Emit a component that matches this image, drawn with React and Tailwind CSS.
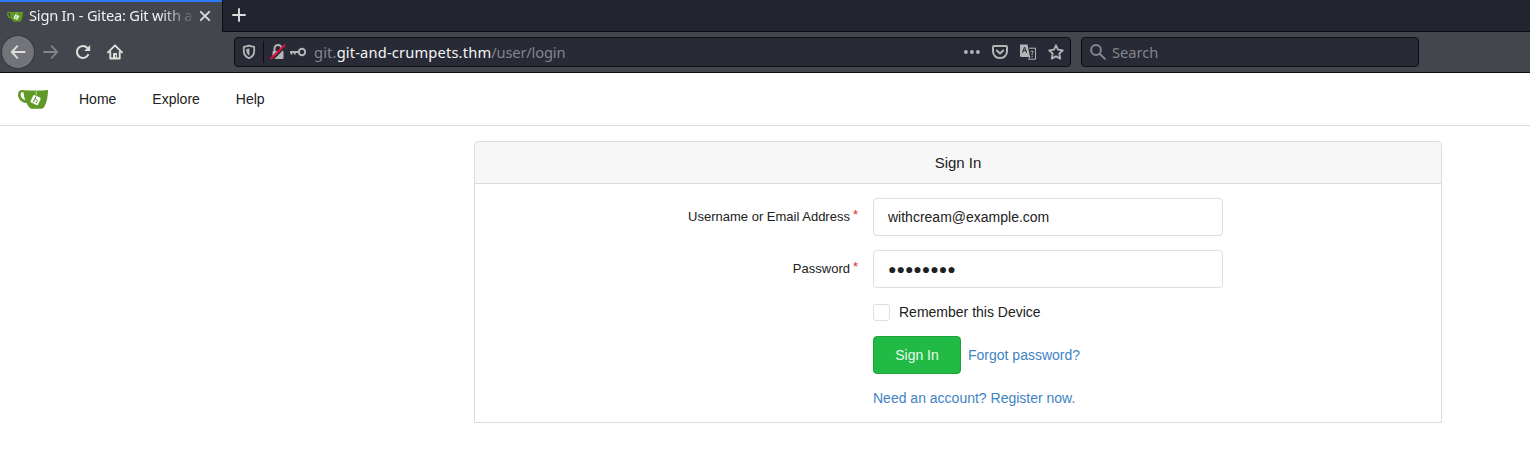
function TeaCup({ className }) {
  return (
    <svg viewBox="0 0 30 20" className={className}>
      <path
        fill="#609926"
        fillRule="evenodd"
        d="M4.200 1C1.500 1 0 3 0 5.600C0 10.400 3.600 13.700 8.700 14C9.500 16.200 11 18.600 12.800 19.400Q13.300 19.700 14 19.700H23.600Q25 19.700 25.800 18.600C28.600 14.800 29.800 8.500 30 1.500Q30 1 29.500 1Q23 1.700 16.500 1.600Q8 1.400 4.200 1ZM3.800 3.300Q4.600 3 5.500 3.400C5.700 6 6.300 8.600 7.200 11C4.400 10.200 2.700 8.200 2.600 5.500Q2.600 3.800 3.800 3.300Z"
      />
      <path d="M18.300 1.300V6.500" stroke="#c0d6a8" strokeWidth=".9" />
      <rect x="13.500" y="7" width="8.200" height="8.200" rx="1.200" fill="#fff" transform="rotate(25 17.600 11.100)" />
      <path d="M17.900 7.600 15.500 12.900M16.900 9.800l1.900.8c.6.300.7.700.5 1.200l-.9 1.900" stroke="#609926" strokeWidth="1" fill="none" />
      <circle cx="15.600" cy="12.800" r=".7" fill="#609926" />
      <circle cx="18.400" cy="13.600" r=".7" fill="#609926" />
    </svg>
  );
}

function Icon({ children, className }) {
  return (
    <svg viewBox="0 0 16 16" fill="none" stroke="currentColor" strokeWidth="2" strokeLinecap="round" strokeLinejoin="round" className={`size-4 shrink-0 ${className || ""}`}>
      {children}
    </svg>
  );
}

function Browser() {
  return (
    <header className="h-[73px] border-b border-[#0c0c0d] bg-[#43464d] font-['Noto_Sans',sans-serif] text-[14.67px]">
      <div className="flex h-8 bg-[#22252f]">
        <div className="flex w-[222px] items-center border-t-2 border-[#2b7bf9] bg-[#43464d] pl-[7px] text-[#f0f0f0]">
          <TeaCup className="h-[11px] w-4 shrink-0 -translate-y-px" />
          <span className="ml-[6px] w-[164px] whitespace-nowrap pb-[4px] leading-5 tracking-[-0.22px] [mask-image:linear-gradient(to_right,black_130px,transparent_168px)]">
            Sign In - Gitea: Git with a
          </span>
          <Icon className="ml-1 -translate-y-px text-[#dededb]">
            <path d="m3.800 3.800 8.400 8.400M12.200 3.800l-8.400 8.400" strokeWidth="1.800" />
          </Icon>
        </div>
        <div className="flex flex-1 items-center border-b border-l border-[#0d0e14] pb-px pl-2 text-[#dededb]">
          <Icon><path d="M8 2v12M2 8h12" strokeWidth="1.900" /></Icon>
        </div>
      </div>
      <div className="flex h-10 items-center text-[#dededb]">
        <div className="ml-[2px] flex size-8 items-center justify-center rounded-full bg-[#72747a] ring-1 ring-[#35373d]">
          <Icon><path d="M14.700 8H2M7.300 2.200 1.800 8l5.500 5.800" strokeWidth="1.900" /></Icon>
        </div>
        <Icon className="ml-[9px] text-[#85878b]">
          <path d="M1 8h13M8.700 2.200 14.200 8l-5.500 5.800" strokeWidth="1.800" />
        </Icon>
        <Icon className="ml-4">
          <path d="M13.500 10.200A6 6 0 1 1 12.400 4" strokeLinecap="butt" />
          <path d="M15.200 1v6H9.200Z" fill="currentColor" stroke="none" />
        </Icon>
        <Icon className="ml-4">
          <path d="M1 8.300 8 1.300l7 7M3.300 8v6.500h9.400V8" strokeWidth="1.900" />
          <path d="M6.500 14v-4.500h3V14" fill="currentColor" strokeWidth="1" />
          <path d="M8.700 11.500v1" stroke="#43464d" strokeWidth="1" />
        </Icon>
        <div className="ml-[111px] flex h-[30px] w-[837px] items-center rounded-[4px] border border-[#0d0e14] bg-[#282a35] text-[#b5b5b7]">
          <Icon className="ml-[6px]">
            <path d="M8 1.600c1.800.7 3.500 1.100 5.200 1.200v4.100c0 3.200-1.700 5.800-5.200 7.400-3.500-1.600-5.200-4.200-5.200-7.400V2.800C4.500 2.700 6.200 2.300 8 1.600Z" strokeWidth="1.800" />
            <path d="M8.400 4.300C7.300 4.800 6.400 5 5.300 5.100v2c0 1.900 1.100 3.500 3.100 4.600Z" fill="currentColor" stroke="none" />
          </Icon>
          <span className="ml-[6px] h-[22px] w-px bg-[#0d0e14]" />
          <Icon className="ml-[6px]">
            <path d="M4.500 7V4.500a3.500 3.500 0 0 1 7 0V7" />
            <rect x="2.500" y="7" width="11" height="8" rx="1" fill="currentColor" stroke="none" />
            <path d="M2.500 15.500 15.800 1.800" stroke="#282a35" strokeWidth="2" />
            <path d="M1.300 14.300 14.500 1.300" stroke="#e3103e" strokeWidth="2" />
          </Icon>
          <Icon className="ml-[4px]">
            <circle cx="12" cy="8" r="3.200" />
            <path d="M8.500 8H0M1.500 8v2.600M4.800 8v2.600" strokeWidth="1.900" strokeLinecap="butt" />
          </Icon>
          <span className="ml-[8px] tracking-[-0.16px] text-[#85868c]">
            <span className="tracking-[0.15px]">git.<span className="tracking-[0.17px] text-[#f5f5f5]">git-and-crumpets.thm</span></span>/user/login
          </span>
          <div className="ml-auto mr-[6px] flex items-center gap-3">
            <Icon>
              <g fill="currentColor" stroke="none"><circle cx="1.900" cy="8" r="1.900" /><circle cx="7.900" cy="8" r="1.900" /><circle cx="13.900" cy="8" r="1.900" /></g>
            </Icon>
            <Icon>
              <path d="M2 2h12q1 0 1 1v4.500a7 6.600 0 0 1-14 0V3q0-1 1-1ZM4.800 6.500 8 9.500l3.200-3" />
            </Icon>
            <Icon>
              <path d="M0 .5h7.500L10 13H1.500Q0 13 0 11.500Z" fill="currentColor" stroke="none" />
              <path d="M2.600 8.500 4.500 3l2 5.500M3.200 6.700h2.700" stroke="#282a35" strokeWidth="1" />
              <path d="M9.500 4.200h6v11H8.500L9.800 13" strokeWidth="1" />
              <path d="M10.800 7.500q1.200-1 2.300-.2.500 1.400-1 2.200v1.300M12.100 12.500v.3" strokeWidth="1" />
            </Icon>
            <Icon>
              <path d="m8 1.300 2 4.400 4.800.6-3.500 3.400.9 4.900L8 12.200l-4.200 2.400.9-4.900L1.200 6.300 6 5.700Z" strokeWidth="1.800" />
            </Icon>
          </div>
        </div>
        <div className="ml-[10px] flex h-[30px] w-[338px] items-center rounded-[4px] border border-[#0d0e14] bg-[#282a35] pl-[8px] text-[#85868c]">
          <Icon><circle cx="6" cy="6" r="4.900" /><path d="m9.700 9.700 5.200 5.200" /></Icon>
          <span className="ml-[6px]">Search</span>
        </div>
      </div>
    </header>
  );
}

function Field({ label, value }) {
  return (
    <div className="mb-[14px] flex h-[38px]">
      <label className="mr-[15px] w-[383px] pt-[11px] text-right text-[13px] leading-[15px]">
        {label}<span className="ml-[3px] inline-block -translate-y-[2px] text-[#db2828]">*</span>
      </label>
      <input
        type="text"
        defaultValue={value}
        className="w-[350px] rounded-[4px] border border-[#dedede] bg-white px-[14px] text-[14px] leading-[17px] outline-none"
      />
    </div>
  );
}

export default function App() {
  return (
    <div className="h-[454px] overflow-hidden bg-white font-['Liberation_Sans',Arial,sans-serif] text-[14px] text-[#212121]">
      <Browser />
      <nav className="flex h-[53px] items-center border-b border-[#dbdbdb] pl-[18px]">
        <TeaCup className="h-5 w-[30px]" />
        <a className="ml-[31px]">Home</a>
        <a className="ml-9">Explore</a>
        <a className="ml-9">Help</a>
      </nav>
      <main className="ml-[474px] mt-[15px] h-[282px] w-[968px] rounded-t-[4px] border border-[#dbdbdb]">
        <h1 className="flex h-[42px] items-center justify-center rounded-t-[3px] border-b border-[#dbdbdb] bg-[#f7f7f7] pt-[2px] text-[15px]">
          Sign In
        </h1>
        <form className="pt-[14px]">
          <Field label="Username or Email Address" value="withcream@example.com" />
          <Field label="Password" value="●●●●●●●●" />
          <div className="pl-[398px]">
            <label className="mt-[16px] flex h-[17px] items-center">
              <input type="checkbox" className="size-[17px] appearance-none rounded-[3px] border border-[#dedede]" />
              <span className="ml-[9px]">Remember this Device</span>
            </label>
            <div className="mt-[15px] flex items-center text-[#4183c4]">
              <button type="button" className="mr-[7px] h-[38px] w-[88px] rounded-[4px] border border-[#1ca33a] bg-[#21ba45] text-white/90">Sign In</button>
              <a>Forgot password?</a>
            </div>
            <a className="mt-[14px] block text-[#4183c4]">Need an account? Register now.</a>
          </div>
        </form>
      </main>
    </div>
  );
}
